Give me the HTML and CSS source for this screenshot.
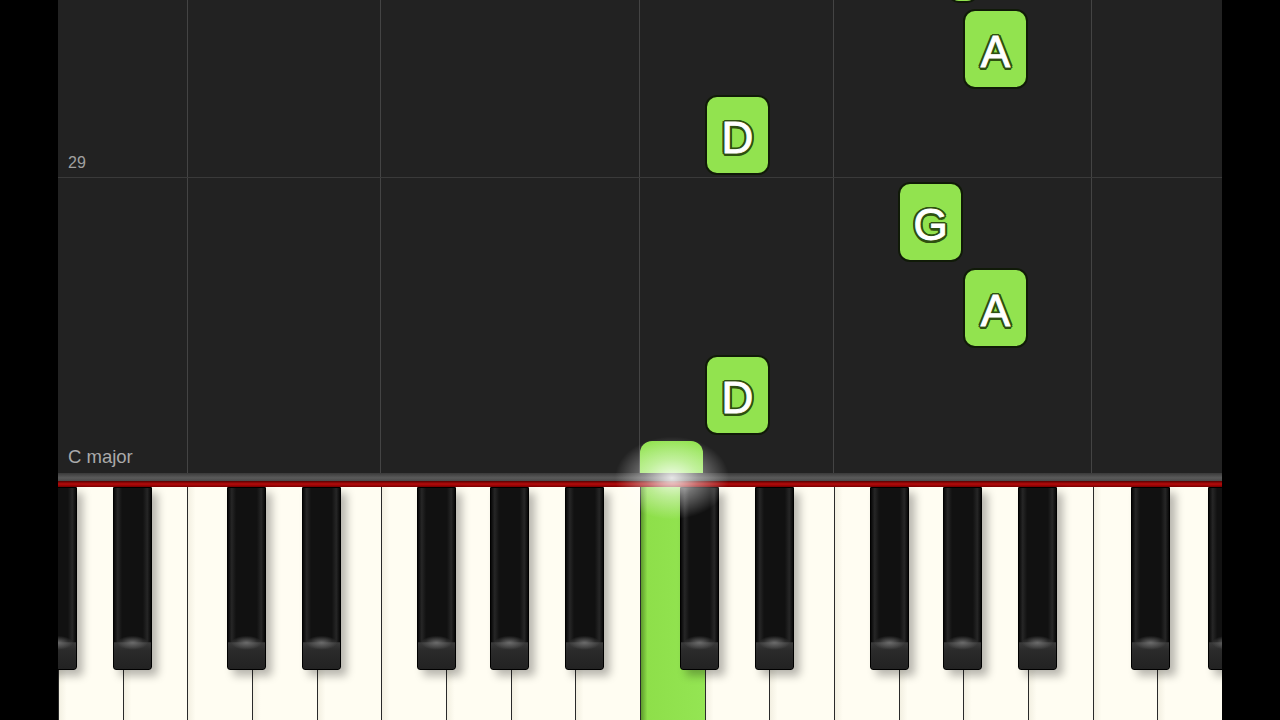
FILE: index.html
```html
<!DOCTYPE html>
<html>
<head>
<meta charset="utf-8">
<link rel="stylesheet" href="styles.css">
</head>
<body>
<div class="screen">
  <div class="side"></div>
  <div class="stage">
    <div class="roll">
      <div class="vline" style="left:129px"></div>
      <div class="vline" style="left:322px"></div>
      <div class="vline" style="left:581px"></div>
      <div class="vline" style="left:775px"></div>
      <div class="vline" style="left:1033px"></div>
      <div class="hline"></div>
      <div class="measure">29</div>
      <div class="key-label">C major</div>

      <div class="note sliver" style="top:-77px"></div>
      <div class="note" style="left:905px;top:9px"><span>A</span></div>
      <div class="note" style="left:647px;top:95px"><span>D</span></div>
      <div class="note" style="left:840px;top:182px"><span>G</span></div>
      <div class="note" style="left:905px;top:268px"><span>A</span></div>
      <div class="note" style="left:647px;top:355px"><span>D</span></div>
      <div class="note active" style="left:582px;top:441px"></div>
    </div>
    <div class="piano">
      <div class="rail"></div>
      <div class="felt"></div>
      <div class="keys">
        <div class="white"></div><div class="white"></div><div class="white"></div>
        <div class="white"></div><div class="white"></div><div class="white"></div>
        <div class="white"></div><div class="white"></div><div class="white"></div>
        <div class="white lit"></div><div class="white"></div><div class="white"></div>
        <div class="white"></div><div class="white"></div><div class="white"></div>
        <div class="white"></div><div class="white"></div><div class="white"></div>

        <div class="black" style="left:-20px"></div>
        <div class="black" style="left:55px"></div>
        <div class="black" style="left:169px"></div>
        <div class="black" style="left:244px"></div>
        <div class="black" style="left:359px"></div>
        <div class="black" style="left:432px"></div>
        <div class="black" style="left:507px"></div>
        <div class="black" style="left:622px"></div>
        <div class="black" style="left:697px"></div>
        <div class="black" style="left:812px"></div>
        <div class="black" style="left:885px"></div>
        <div class="black" style="left:960px"></div>
        <div class="black" style="left:1073px"></div>
        <div class="black" style="left:1150px"></div>
      </div>
      <div class="glow"></div>
    </div>
  </div>
  <div class="side"></div>
</div>
</body>
</html>
```
FILE: styles.css
```css
html, body {
  margin: 0;
  padding: 0;
  background: #000;
  width: 1280px;
  height: 720px;
  overflow: hidden;
  font-family: "Liberation Sans", Arial, sans-serif;
}

.screen {
  display: flex;
  width: 1280px;
  height: 720px;
}

.side {
  width: 58px;
  flex: none;
  background: #000;
}

.stage {
  width: 1164px;
  flex: none;
  display: flex;
  flex-direction: column;
  overflow: hidden;
  position: relative;
}

.roll {
  position: relative;
  height: 473px;
  flex: none;
  background: #222222;
}

.vline {
  position: absolute;
  top: 0;
  bottom: 0;
  width: 1px;
  background: #444444;
}

.hline {
  position: absolute;
  left: 0;
  right: 0;
  top: 177px;
  height: 1px;
  background: #3a3a3a;
}

.measure {
  position: absolute;
  left: 10px;
  top: 154px;
  font-size: 16px;
  color: #a0a0a0;
}

.key-label {
  position: absolute;
  left: 10px;
  top: 446px;
  font-size: 18.5px;
  color: #aaaaaa;
}

.note {
  position: absolute;
  width: 65px;
  height: 80px;
  box-sizing: border-box;
  border-radius: 12px;
  background: #92e34f;
  border: 2px solid #101a08;
  display: flex;
  align-items: center;
  justify-content: center;
}

.note.sliver {
  width: 32px;
  left: 889px;
}

.note span {
  font-size: 44px;
  line-height: 1;
  color: #fff;
  margin-top: 6px;
  -webkit-text-stroke: 1px #ffffff;
  text-shadow:
    2px 0 0 #2e5010, -2px 0 0 #2e5010, 0 2px 0 #2e5010, 0 -2px 0 #2e5010,
    1.5px 1.5px 0 #2e5010, -1.5px 1.5px 0 #2e5010, 1.5px -1.5px 0 #2e5010, -1.5px -1.5px 0 #2e5010,
    2.5px 1px 0 #2e5010, -2.5px 1px 0 #2e5010, 2.5px -1px 0 #2e5010, -2.5px -1px 0 #2e5010,
    1px 2.5px 0 #2e5010, -1px 2.5px 0 #2e5010, 1px -2.5px 0 #2e5010, -1px -2.5px 0 #2e5010;
}

.note.active {
  left: 582px;
  width: 63px;
  height: 60px;
  border: none;
  border-radius: 12px 12px 0 0;
  background: linear-gradient(180deg, #8fe24c 0%, #9be95e 55%, #d8f7c0 100%);
}

.piano {
  position: relative;
  flex: 1;
  display: flex;
  flex-direction: column;
}

.rail {
  height: 8px;
  flex: none;
  background: linear-gradient(180deg, #3a3a3a 0%, #5a5a5a 60%, #4a4a4a 100%);
}

.felt {
  height: 6px;
  flex: none;
  background: linear-gradient(180deg, #5a0000 0%, #b50c0c 50%, #7a0000 100%);
}

.keys {
  position: relative;
  flex: 1;
  display: flex;
  background: #222;
}

.white {
  flex: 1;
  background: linear-gradient(90deg, #f3f0e2 0%, #fffdf2 12%, #fffdf2 100%);
  border-right: 1px solid #2a2a2a;
  border-left: 1px solid #2a2a2a;
  margin-right: -1px;
}

.white.lit {
  background: linear-gradient(90deg, #5d9a2c 0%, #8edf4a 10%, #94e553 100%);
}

.black {
  position: absolute;
  top: 0;
  width: 39px;
  height: 183px;
  box-sizing: border-box;
  border-radius: 0 0 3px 3px;
  background:
    radial-gradient(ellipse 60% 10px at 50% 85.5%, #6a6a6a 0%, rgba(80,80,80,0) 70%),
    linear-gradient(180deg, rgba(0,0,0,0) 0%, rgba(0,0,0,0) 85%, #3a3a3a 85.5%, #2a2a2a 90%, #222 100%),
    linear-gradient(90deg, #080808 0%, #262626 10%, #111 22%, #111 78%, #262626 90%, #080808 100%);
  border: 1px solid #000;
  box-shadow: 6px 6px 8px rgba(0, 0, 0, 0.28);
}

.glow {
  position: absolute;
  left: 552px;
  top: -40px;
  width: 124px;
  height: 90px;
  background: radial-gradient(ellipse at 50% 50%, rgba(255,255,255,0.85) 0%, rgba(255,255,255,0.4) 30%, rgba(255,255,255,0) 65%);
  pointer-events: none;
}
```
